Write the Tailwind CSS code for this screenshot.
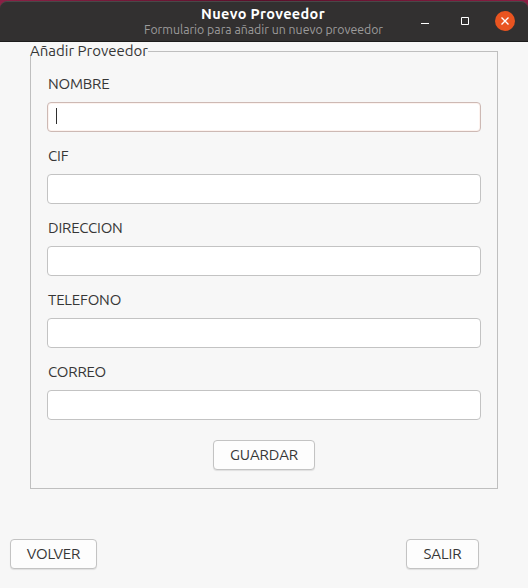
<!DOCTYPE html>
<html lang="es">
<head>
<meta charset="utf-8">
<title>Nuevo Proveedor</title>
<script src="https://cdn.jsdelivr.net/npm/@tailwindcss/browser@4"></script>
</head>
<body class="h-[588px] w-[528px] overflow-hidden bg-[#7a1b3b] font-['Ubuntu','Noto_Sans',sans-serif] text-[15px] text-[#363636]">
<div class="flex h-full flex-col bg-linear-to-r from-[#8b2045] via-[#5b0f2b] to-[#8b1c42] pt-px">
  <header class="relative flex h-[41px] shrink-0 flex-col items-center rounded-t-[7px] border-t border-b border-t-[#494848] border-b-[#1d1c1c] bg-[#323030]">
    <h1 class="mt-[4px] mr-[2px] h-[16px] text-[14.5px] leading-[16px] font-bold whitespace-nowrap text-white"><span class="inline-block tracking-[0.35px]">Nuevo Proveedor</span></h1>
    <p class="mr-px h-[15px] text-[12.3px] leading-[15px] whitespace-nowrap text-[#9c9b9b]"><span class="inline-block">Formulario para añadir un nuevo proveedor</span></p>
    <div class="absolute top-[9px] right-[13px] flex items-center gap-5">
      <svg class="size-5" viewBox="0 0 20 20"><path d="M6 12.5h8" stroke="#fff"/></svg>
      <svg class="size-5" viewBox="0 0 20 20"><path d="M6.5 6.5h7v7h-7z" fill="none" stroke="#fff"/></svg>
      <svg class="size-5" viewBox="0 0 20 20"><circle cx="10" cy="10" r="10" fill="#e95420"/><path d="M6.5 6.5l7 7M13.5 6.5l-7 7" stroke="#fff" stroke-width="1.4"/></svg>
    </div>
  </header>
  <main class="flex flex-1 flex-col bg-[#f7f7f7]">
    <fieldset class="mt-1 mr-[30px] ml-[30px] h-[443px] border border-[#bfbfbf] px-4">
      <legend class="-ml-[17px] h-[10px] leading-[10px] whitespace-nowrap">Añadir Proveedor</legend>
      <div class="mt-[18px] flex flex-col gap-[14px]">
        <label class="flex flex-col"><span class="ml-px h-[28px] leading-[20px] tracking-[-0.2px]">NOMBRE</span><span class="flex h-[30px] items-center rounded-[4px] border border-[#cdb9b4] bg-white pl-[8px] shadow-[inset_0_0_0_1px_#fdf3ef]"><span class="-mt-[2px] h-[16px] w-px bg-[#2f2f2f]"></span></span></label>
        <label class="flex flex-col"><span class="ml-px h-[28px] leading-[20px] tracking-[-0.2px]">CIF</span><span class="h-[30px] rounded-[4px] border border-[#c3c3c3] bg-white"></span></label>
        <label class="flex flex-col"><span class="ml-px h-[28px] leading-[20px] tracking-[-0.2px]">DIRECCION</span><span class="h-[30px] rounded-[4px] border border-[#c3c3c3] bg-white"></span></label>
        <label class="flex flex-col"><span class="ml-px h-[28px] leading-[20px] tracking-[-0.2px]">TELEFONO</span><span class="h-[30px] rounded-[4px] border border-[#c3c3c3] bg-white"></span></label>
        <label class="flex flex-col"><span class="ml-px h-[28px] leading-[20px] tracking-[-0.2px]">CORREO</span><span class="h-[30px] rounded-[4px] border border-[#c3c3c3] bg-white"></span></label>
      </div>
      <button class="mx-auto mt-[20px] block h-[30px] w-[102px] rounded-[4px] border border-[#c3c3c3] bg-[#fdfdfd] leading-[28px] tracking-[-0.1px] shadow-[0_1px_1px_#00000018]">GUARDAR</button>
    </fieldset>
    <footer class="mt-[50px] mr-[49px] ml-[10px] flex justify-between">
      <button class="h-[30px] w-[87px] rounded-[4px] border border-[#c3c3c3] bg-[#fdfdfd] leading-[28px] tracking-[-0.2px] shadow-[0_1px_1px_#00000018]">VOLVER</button>
      <button class="h-[30px] w-[73px] rounded-[4px] border border-[#c3c3c3] bg-[#fdfdfd] leading-[28px] tracking-[-0.1px] shadow-[0_1px_1px_#00000018]">SALIR</button>
    </footer>
  </main>
</div>
</body>
</html>
